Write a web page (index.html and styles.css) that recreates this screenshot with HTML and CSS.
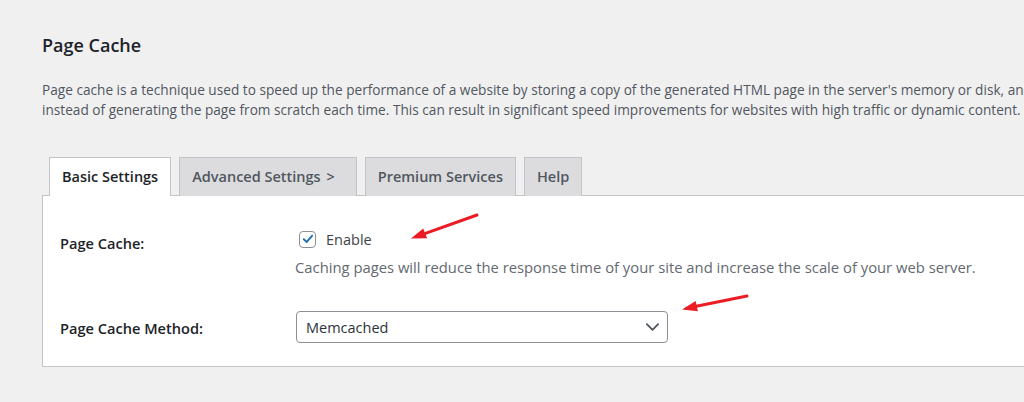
FILE: index.html
```html
<!DOCTYPE html>
<html lang="en">
<head>
<meta charset="utf-8">
<title>Page Cache</title>
<link rel="stylesheet" href="styles.css">
</head>
<body>
<div class="wrap">
  <h2 class="title">Page Cache</h2>
  <p class="intro">
    <span class="line">Page cache is a technique used to speed up the performance of a website by storing a copy of the generated HTML page in the server's memory or disk, and</span>
    <span class="line">instead of generating the page from scratch each time. This can result in significant speed improvements for websites with high traffic or dynamic content.</span>
  </p>
  <nav class="tabs">
    <a class="tab active">Basic Settings</a>
    <a class="tab tab-more">Advanced Settings <span class="chev">&gt;</span></a>
    <a class="tab">Premium Services</a>
    <a class="tab">Help</a>
  </nav>
  <div class="panel">
    <div class="row row-first">
      <div class="label">Page Cache:</div>
      <div class="field">
        <label class="check-line">
          <span class="checkbox">
            <svg viewBox="0 0 16 16" width="14" height="14"><path d="M3.2 8.2 L6.6 11.4 L12.8 4.2" fill="none" stroke="#2271b1" stroke-width="2.2" stroke-linecap="round" stroke-linejoin="round"/></svg>
          </span>
          <span>Enable</span>
        </label>
        <p class="desc">Caching pages will reduce the response time of your site and increase the scale of your web server.</p>
      </div>
    </div>
    <div class="row row-second">
      <div class="label label-select">Page Cache Method:</div>
      <div class="field">
        <div class="select">
          <span>Memcached</span>
          <svg viewBox="0 0 14 8" width="13" height="8"><path d="M1 1 L7 7 L13 1" fill="none" stroke="#50575e" stroke-width="2" stroke-linecap="round" stroke-linejoin="round"/></svg>
        </div>
      </div>
    </div>
  </div>
</div>
<svg class="annot" width="1024" height="402" viewBox="0 0 1024 402">
  <line x1="477" y1="215" x2="424" y2="233.8" stroke="#ec1c24" stroke-width="3" stroke-linecap="round"/>
  <polygon points="411,238.5 427.2,238.3 423.2,228.4" fill="#ec1c24"/>
  <line x1="747" y1="296" x2="695" y2="306.5" stroke="#ec1c24" stroke-width="3" stroke-linecap="round"/>
  <polygon points="682,309.5 697.9,311.3 695.7,301.1" fill="#ec1c24"/>
</svg>
</body>
</html>
```
FILE: styles.css
```css
html, body {
  margin: 0;
  padding: 0;
}
body {
  background: #f0f0f1;
  font-family: "Open Sans", "Noto Sans", "Liberation Sans", sans-serif;
  color: #1d2327;
  width: 1024px;
  height: 402px;
  overflow: hidden;
  position: relative;
}
.wrap {
  padding: 31px 0 0 42px;
  width: 1200px;
}
.title {
  margin: 0;
  font-size: 18px;
  font-weight: 600;
  line-height: 28px;
  color: #1d2327;
}
.intro {
  margin: 21px 0 0;
  font-size: 13.65px;
  line-height: 20px;
  color: #50575e;
}
.line {
  display: block;
  white-space: nowrap;
}
.tabs {
  display: flex;
  align-items: flex-end;
  gap: 8px;
  margin-top: 37px;
  padding-left: 7px;
  position: relative;
  z-index: 1;
  margin-bottom: -1px;
}
.tab {
  display: block;
  box-sizing: border-box;
  height: 39px;
  padding: 0 12px;
  border: 1px solid #c3c4c7;
  border-bottom: none;
  background: #dcdcde;
  color: #50575e;
  font-size: 14.5px;
  font-weight: 600;
  line-height: 38px;
  white-space: nowrap;
}
.tab.active {
  background: #fff;
  color: #1d2327;
}
.tab-more {
  padding-right: 21px;
}
.chev {
  font-weight: 600;
  margin-left: 2px;
}
.panel {
  box-sizing: border-box;
  width: 1100px;
  height: 172px;
  background: #fff;
  border: 1px solid #c3c4c7;
  padding: 0 17px;
}
.row {
  display: grid;
  grid-template-columns: 236px 1fr;
}
.row-first {
  padding-top: 32px;
}
.row-second {
  padding-top: 33px;
}
.label {
  font-size: 14.6px;
  font-weight: 600;
  line-height: 22px;
  margin-top: 4px;
  color: #1d2327;
}
.label-select {
  margin-top: 6px;
}
.check-line {
  display: flex;
  align-items: center;
  height: 22px;
  font-size: 14.5px;
  color: #3c434a;
}
.checkbox {
  display: flex;
  align-items: center;
  justify-content: center;
  box-sizing: border-box;
  width: 17px;
  height: 17px;
  margin: 0 10px 0 3px;
  border: 1px solid #8c8f94;
  border-radius: 4px;
  background: #fff;
}
.desc {
  margin: 6px 0 0 -1px;
  font-size: 14.8px;
  line-height: 22px;
  color: #646970;
}
.select {
  box-sizing: border-box;
  display: flex;
  align-items: center;
  justify-content: space-between;
  width: 372px;
  height: 32px;
  padding: 0 8px 0 9px;
  border: 1px solid #8c8f94;
  border-radius: 4px;
  background: #fff;
  font-size: 14.5px;
  color: #2c3338;
}
.annot {
  position: absolute;
  top: 0;
  left: 0;
  pointer-events: none;
}
```
